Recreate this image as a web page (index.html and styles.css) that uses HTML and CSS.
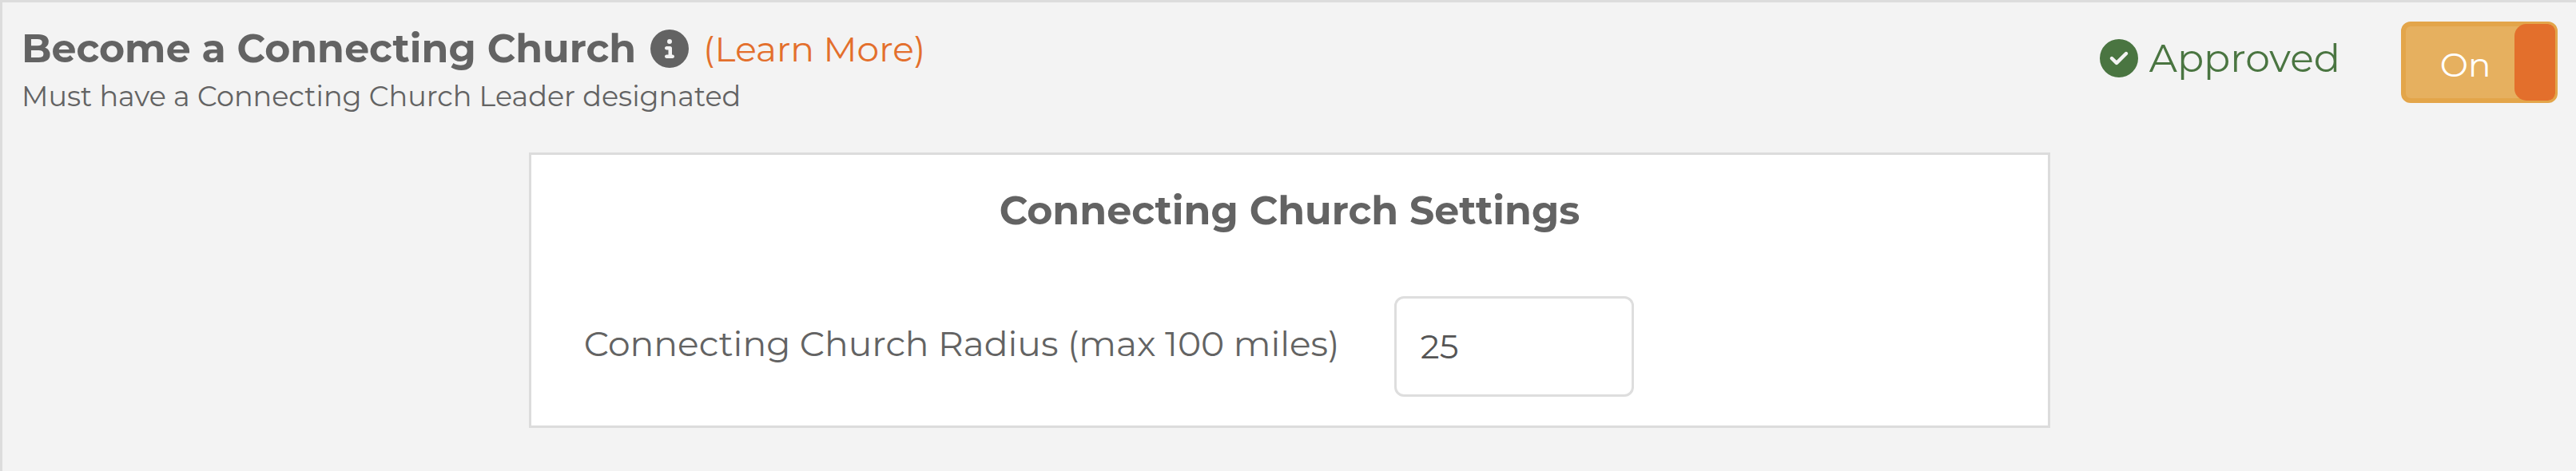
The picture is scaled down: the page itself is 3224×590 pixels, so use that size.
FILE: index.html
```html
<!DOCTYPE html>
<html lang="en">
<head>
<meta charset="utf-8">
<meta name="viewport" content="width=device-width, initial-scale=1">
<title>Connecting Church</title>
<link rel="stylesheet" href="styles.css">
</head>
<body>
<main class="panel">
  <header class="panel-header">
    <div class="intro">
      <div class="title-row">
        <h1 class="title" id="program-title">Become a Connecting Church</h1>
        <svg class="icon" viewBox="0 0 512 512" role="img" aria-label="Information"><path fill="currentColor" d="M256 512A256 256 0 1 0 256 0a256 256 0 1 0 0 512zM216 336h24V272H216c-13.3 0-24-10.7-24-24s10.7-24 24-24h48c13.3 0 24 10.7 24 24v88h8c13.3 0 24 10.7 24 24s-10.7 24-24 24H216c-13.3 0-24-10.7-24-24s10.7-24 24-24zm40-208a32 32 0 1 1 0 64 32 32 0 1 1 0-64z"/></svg>
        <a class="learn-more" href="#">(Learn More)</a>
      </div>
      <p class="subtitle">Must have a Connecting Church Leader designated</p>
    </div>
    <div class="actions">
      <div class="status">
        <svg class="icon" viewBox="0 0 512 512" aria-hidden="true"><path fill="currentColor" d="M256 512A256 256 0 1 0 256 0a256 256 0 1 0 0 512zM369 209L241 337c-9.4 9.4-24.6 9.4-33.9 0l-64-64c-9.4-9.4-9.4-24.6 0-33.9s24.6-9.4 33.9 0l47 47L335 175c9.4-9.4 24.6-9.4 33.9 0s9.4 24.6 0 33.9z"/></svg>
        <span>Approved</span>
      </div>
      <button class="switch" type="button" role="switch" aria-checked="true" aria-labelledby="program-title">
        <span class="switch-text">On</span>
        <span class="switch-knob"></span>
      </button>
    </div>
  </header>
  <section class="card">
    <h2 class="title">Connecting Church Settings</h2>
    <div class="field">
      <label class="field-label" for="radius">Connecting Church Radius (max 100 miles)</label>
      <input class="field-input" id="radius" type="text" inputmode="numeric" value="25">
    </div>
  </section>
</main>
</body>
</html>
```
FILE: styles.css
```css
* {
  box-sizing: border-box;
}

body {
  margin: 0;
  background: #f3f3f3;
  color: #636363;
  font-family: Montserrat, Inter, sans-serif;
  font-size: 44px;
  font-weight: 400;
  line-height: 60px;
}

h1, h2, p {
  margin: 0;
}

.panel {
  min-height: 100vh;
  padding: 24px 23px 24px 24px;
  border-top: 3px solid #dcdcdc;
  border-left: 3px solid #dcdcdc;
}

.panel-header {
  display: flex;
  justify-content: space-between;
  align-items: flex-start;
  gap: 48px;
}

.intro {
  padding-top: 4px;
}

.title-row {
  display: flex;
  align-items: center;
  gap: 18px;
}

.title {
  font-size: 49px;
  font-weight: 700;
  line-height: 60px;
}

.icon {
  width: 48px;
  height: 48px;
  flex: none;
}

.learn-more {
  color: #e36f2c;
  text-decoration: none;
}

.subtitle {
  font-size: 35px;
  line-height: 60px;
}

.actions {
  display: flex;
  gap: 76px;
}

.status {
  display: flex;
  align-items: center;
  align-self: flex-start;
  gap: 14px;
  padding-top: 16px;
  color: #4a7541;
  font-size: 49px;
}

.switch {
  display: flex;
  width: 196px;
  height: 102px;
  padding: 0;
  border: 3px solid #e3a54a;
  border-radius: 12px;
  background: #e6b05f;
  box-shadow: inset 0 0 0 3px #e3a54a;
  color: #fff;
  font: inherit;
  font-size: 42px;
  overflow: hidden;
}

.switch-text {
  flex: 1;
  padding-top: 21px;
  padding-left: 16px;
  text-align: center;
}

.switch-knob {
  width: 51px;
  align-self: stretch;
  border-radius: 15px 9px 9px 15px;
  background: #e36f2c;
}

.card {
  width: 60%;
  margin: 40px auto 0;
  padding: 40px 66px 36px;
  border: 3px solid #dcdcdc;
  background: #fff;
}

.card .title {
  text-align: center;
}

.field {
  display: grid;
  grid-template-columns: 31fr 23fr;
  align-items: center;
  margin-top: 77px;
}

.field-label {
  padding-bottom: 8px;
}

.field-input {
  width: 300px;
  height: 126px;
  padding: 0 30px;
  border: 3px solid #dedede;
  border-radius: 12px;
  background: #fff;
  color: #555;
  font: inherit;
  font-size: 42px;
}
```
